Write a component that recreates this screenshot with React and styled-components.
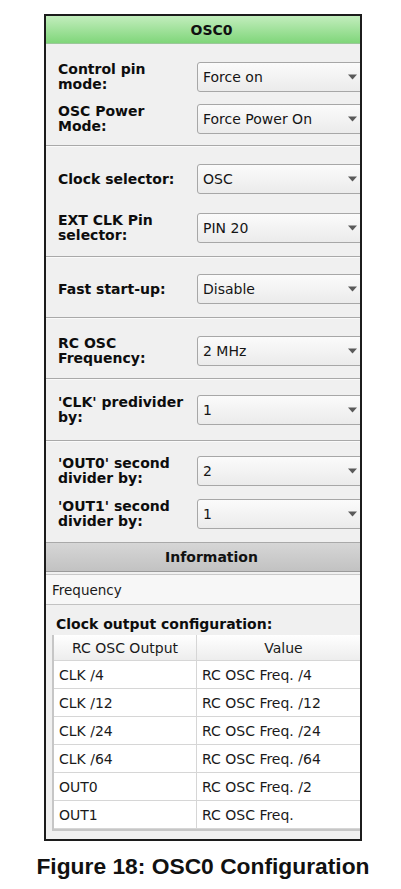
import React from "react";
import styled, { createGlobalStyle } from "styled-components";

const Global = createGlobalStyle`
  html, body { margin: 0; padding: 0; background: #ffffff; }
  body { font-family: "DejaVu Sans", sans-serif; }
`;

const Page = styled.div`
  width: 401px;
  padding-top: 14px;
  display: flex;
  flex-direction: column;
  align-items: flex-start;
`;

const Frame = styled.div`
  margin-left: 44px;
  width: 318px;
  box-sizing: border-box;
  border: 2px solid #1c1c1c;
  background: #f0f0f0;
  overflow: hidden;
`;

const Inner = styled.div`
  width: 331px;
  display: flex;
  flex-direction: column;
`;

const GreenHeader = styled.div`
  height: 28px;
  box-sizing: border-box;
  border-bottom: 1px solid #9cc79a;
  background: linear-gradient(#c2edbd, #80d67a);
  display: flex;
  align-items: center;
  justify-content: center;
  font: bold 14px "DejaVu Sans", sans-serif;
  color: #111;
`;

const Section = styled.div`
  display: flex;
  flex-direction: column;
  gap: ${(p) => p.$gap || 12}px;
  padding: ${(p) => p.$top}px 0 ${(p) => p.$bottom}px;
  border-bottom: ${(p) => (p.$last ? "none" : "1px solid #a9a9a9")};
  box-shadow: ${(p) => (p.$last ? "none" : "0 1px 0 #fafafa")};
`;

const Row = styled.div`
  display: grid;
  grid-template-columns: 130px 168px;
  column-gap: 9px;
  padding-left: 12px;
  align-items: center;
`;

const Label = styled.div`
  font: bold 14px/15px "DejaVu Sans", sans-serif;
  color: #0d0d0d;
`;

const Select = styled.div`
  height: 30px;
  box-sizing: border-box;
  border: 1px solid #a7a7a7;
  border-radius: 3px;
  background: linear-gradient(#fbfbfb, #ebebeb);
  display: flex;
  align-items: center;
  justify-content: space-between;
  padding: 0 7px 0 5px;
  font: 14px "DejaVu Sans", sans-serif;
  color: #151515;
`;

const Arrow = () => (
  <svg width="9" height="6" viewBox="0 0 9 6">
    <path d="M0 0.5 H9 L4.5 5.5 Z" fill="#5a5a5a" />
  </svg>
);

const InfoHeader = styled.div`
  height: 30px;
  box-sizing: border-box;
  border-top: 1px solid #a9a9a9;
  border-bottom: 1px solid #9a9a9a;
  background: linear-gradient(#d6d6d6, #c2c2c2);
  display: flex;
  align-items: center;
  justify-content: center;
  font: bold 14px "DejaVu Sans", sans-serif;
  color: #111;
`;

const FreqRow = styled.div`
  margin-top: 2px;
  height: 31px;
  box-sizing: border-box;
  border-top: 1px solid #c9c9c9;
  border-bottom: 1px solid #c2c2c2;
  background: #f7f7f7;
  display: flex;
  align-items: center;
  padding-left: 6px;
  font: 13.5px "DejaVu Sans", sans-serif;
  color: #1a1a1a;
`;

const SubTitle = styled.div`
  height: 30px;
  display: flex;
  align-items: flex-end;
  padding: 0 0 3px 10px;
  box-sizing: border-box;
  font: bold 14px "DejaVu Sans", sans-serif;
  color: #0d0d0d;
`;

const TableWrap = styled.div`
  margin: 0 0 8px 6px;
  border-left: 2px solid #c6c6c6;
  border-bottom: 2px solid #c6c6c6;
  background: #ffffff;
`;

const Table = styled.div`
  display: grid;
  grid-template-columns: 143px 174px;
`;

const Cell = styled.div`
  height: ${(p) => (p.$head ? 26 : 28)}px;
  box-sizing: border-box;
  border-right: 1px solid #d6d6d6;
  border-bottom: 1px solid #d6d6d6;
  background: ${(p) => (p.$head ? "linear-gradient(#ffffff, #ededed)" : "#ffffff")};
  display: flex;
  align-items: center;
  justify-content: ${(p) => (p.$head ? "center" : "flex-start")};
  padding-left: ${(p) => (p.$head ? 0 : 5)}px;
  font: 14px "DejaVu Sans", sans-serif;
  color: #1a1a1a;
  white-space: nowrap;
`;

const Caption = styled.div`
  width: 401px;
  margin-top: 12px;
  text-align: center;
  padding-left: 5px;
  box-sizing: border-box;
  font: bold 22.8px "Liberation Sans", Arial, sans-serif;
  color: #111;
`;

const sections = [
  { top: 18, bottom: 11, rows: [["Control pin mode:", "Force on"], ["OSC Power Mode:", "Force Power On"]] },
  { top: 18, gap: 19, bottom: 13, rows: [["Clock selector:", "OSC"], ["EXT CLK Pin selector:", "PIN 20"]] },
  { top: 17, bottom: 13, rows: [["Fast start-up:", "Disable"]] },
  { top: 18, bottom: 12, rows: [["RC OSC Frequency:", "2 MHz"]] },
  { top: 16, bottom: 15, rows: [["'CLK' predivider by:", "1"]] },
  { top: 15, gap: 13, bottom: 13, last: true, rows: [["'OUT0' second divider by:", "2"], ["'OUT1' second divider by:", "1"]] },
];

const tableRows = [
  ["CLK /4", "RC OSC Freq. /4"],
  ["CLK /12", "RC OSC Freq. /12"],
  ["CLK /24", "RC OSC Freq. /24"],
  ["CLK /64", "RC OSC Freq. /64"],
  ["OUT0", "RC OSC Freq. /2"],
  ["OUT1", "RC OSC Freq."],
];

export default function App() {
  return (
    <>
      <Global />
      <Page>
        <Frame>
          <Inner>
            <GreenHeader>OSC0</GreenHeader>
            {sections.map((s, i) => (
              <Section key={i} $top={s.top} $gap={s.gap} $bottom={s.bottom} $last={s.last}>
                {s.rows.map(([l, v]) => (
                  <Row key={l}>
                    <Label>{l}</Label>
                    <Select>
                      <span>{v}</span>
                      <Arrow />
                    </Select>
                  </Row>
                ))}
              </Section>
            ))}
            <InfoHeader>Information</InfoHeader>
            <FreqRow>Frequency</FreqRow>
            <SubTitle>Clock output configuration:</SubTitle>
            <TableWrap>
              <Table>
                <Cell $head>RC OSC Output</Cell>
                <Cell $head>Value</Cell>
                {tableRows.map(([a, b]) => (
                  <React.Fragment key={a}>
                    <Cell>{a}</Cell>
                    <Cell>{b}</Cell>
                  </React.Fragment>
                ))}
              </Table>
            </TableWrap>
          </Inner>
        </Frame>
        <Caption>Figure 18: OSC0 Configuration</Caption>
      </Page>
    </>
  );
}
